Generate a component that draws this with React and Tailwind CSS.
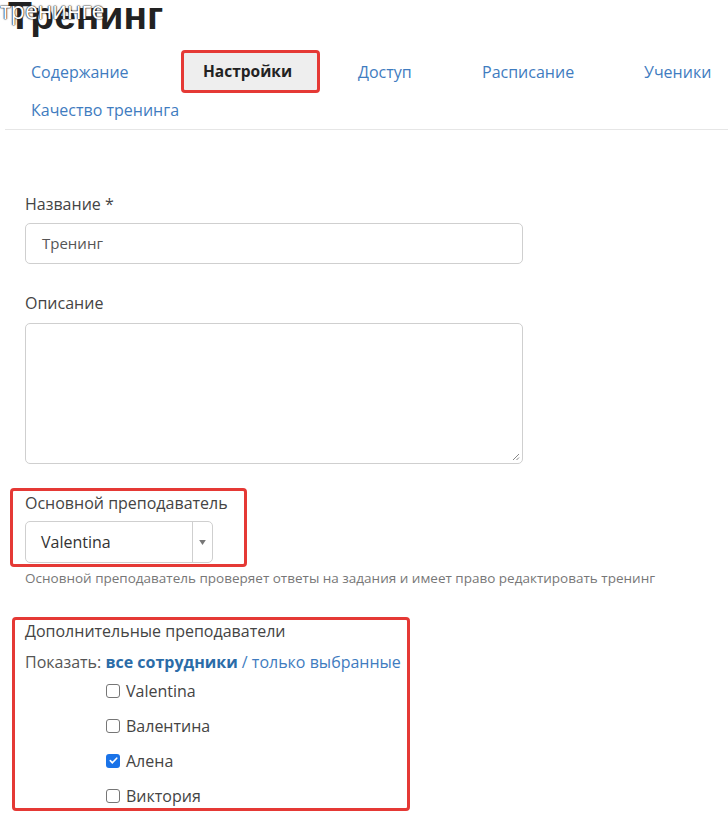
import React from "react";

const tabs = [
  { label: "Содержание", cls: "w-[169px] pl-[19px]" },
  { label: "Настройки", cls: "w-[139px] pl-[19px]", active: true },
  { label: "Доступ", cls: "w-[143px] pl-[38px]" },
  { label: "Расписание", cls: "w-[162px] pl-[19px]" },
  { label: "Ученики", cls: "w-[100px] pl-[19px]" },
];

const teachers = [
  { name: "Valentina", checked: false },
  { name: "Валентина", checked: false },
  { name: "Алена", checked: true },
  { name: "Виктория", checked: false },
];

const Checkbox = ({ checked }) =>
  checked ? (
    <span className="flex h-[14px] w-[14px] items-center justify-center rounded-[3px] bg-[#1a73e8]">
      <svg viewBox="0 0 12 12" className="h-[11px] w-[11px]" fill="none">
        <path d="M2.5 6.2l2.3 2.3 4.7-5" stroke="white" strokeWidth="1.8" strokeLinecap="round" strokeLinejoin="round" />
      </svg>
    </span>
  ) : (
    <span className="h-[14px] w-[14px] rounded-[3px] border-[1.5px] border-[#767676] bg-white" />
  );

export default function App() {
  return (
    <div className="relative h-[815px] w-[728px] overflow-hidden bg-white font-['Open_Sans',sans-serif] text-[#444]">
      {/* stray caption over the title */}
      <span className="absolute left-0 top-[-3px] z-10 text-[23px] leading-[26px] text-white [text-shadow:0_0_1px_#222,0_0_1px_#222,0_0_2px_#333]">
        тренинге
      </span>

      {/* Title */}
      <div className="h-[50px] overflow-hidden">
        <h1 className="mt-[-4px] pl-[8px] font-['Liberation_Sans',sans-serif] text-[39px] font-bold leading-none text-[#222]">
          Тренинг
        </h1>
      </div>

      {/* Tabs */}
      <div className="ml-[5px] border-b border-[#e6e6e6] pb-[2px]">
        <div className="flex pl-[7px]">
          {tabs.map((t) =>
            t.active ? (
              <div
                key={t.label}
                className={`${t.cls} flex h-[43px] items-center rounded-[4px] border-[3px] border-[#e53935] bg-[#eeeeee] pl-[16px] text-[15.5px] font-bold text-[#222]`}
              >
                {t.label}
              </div>
            ) : (
              <div key={t.label} className={`${t.cls} flex h-[43px] items-center text-[16px] text-[#3f7cc0]`}>
                {t.label}
              </div>
            )
          )}
        </div>
        <div className="flex h-[34px] items-center pl-[26px] text-[16px] text-[#3f7cc0]">Качество тренинга</div>
      </div>

      {/* Form */}
      <div className="pl-[25px] pt-[64px]">
        <div className="text-[16px] leading-[20px] text-[#444]">Название *</div>
        <div className="mt-[9px] flex h-[41px] w-[498px] items-center rounded-[5px] border border-[#cfcfcf] pl-[16px] text-[15px] text-[#555]">
          Тренинг
        </div>

        <div className="mt-[29px] text-[16px] leading-[20px] text-[#444]">Описание</div>
        <div className="relative mt-[10px] h-[141px] w-[498px] rounded-[5px] border border-[#cfcfcf]">
          <svg className="absolute bottom-[2px] right-[2px] h-[9px] w-[9px]" viewBox="0 0 9 9">
            <path d="M8 2L2 8M8 5.5L5.5 8" stroke="#888" strokeWidth="1" />
          </svg>
        </div>
      </div>

      {/* Main teacher */}
      <div className="ml-[10px] mt-[24px] w-[237px] rounded-[4px] border-[3px] border-[#e53935] pb-[1px] pl-[12px] pt-[2px]">
        <div className="text-[16px] leading-[20px] text-[#444]">Основной преподаватель</div>
        <div className="mt-[8px] flex h-[42px] w-[188px] items-center rounded-[5px] border border-[#cfcfcf]">
          <span className="flex-1 pl-[15px] text-[16px] text-[#333]">Valentina</span>
          <span className="flex h-full w-[20px] items-center justify-center border-l border-[#cfcfcf]">
            <svg viewBox="0 0 8 6" className="h-[5px] w-[7px]">
              <path d="M0 0h8L4 6z" fill="#777" />
            </svg>
          </span>
        </div>
      </div>
      <div className="pl-[25px] pt-[3px] text-[13.5px] leading-[16px] text-[#777]">
        Основной преподаватель проверяет ответы на задания и имеет право редактировать тренинг
      </div>

      {/* Additional teachers */}
      <div className="ml-[12px] mt-[31px] h-[194px] w-[398px] rounded-[4px] border-[3px] border-[#e53935] pl-[10px] pt-[1px]">
        <div className="text-[16px] leading-[20px] text-[#444]">Дополнительные преподаватели</div>
        <div className="mt-[11px] text-[16px] leading-[20px] text-[#555]">
          Показать: <span className="font-bold text-[#2b6ca8]">все сотрудники</span>{" "}
          <span className="text-[#3f7cc0]">/ только выбранные</span>
        </div>
        <div className="flex flex-col pl-[81px] pt-[1px]">
          {teachers.map((t) => (
            <label key={t.name} className="flex h-[35px] items-center gap-[6px] text-[16px] text-[#444]">
              <Checkbox checked={t.checked} />
              {t.name}
            </label>
          ))}
        </div>
      </div>
    </div>
  );
}
